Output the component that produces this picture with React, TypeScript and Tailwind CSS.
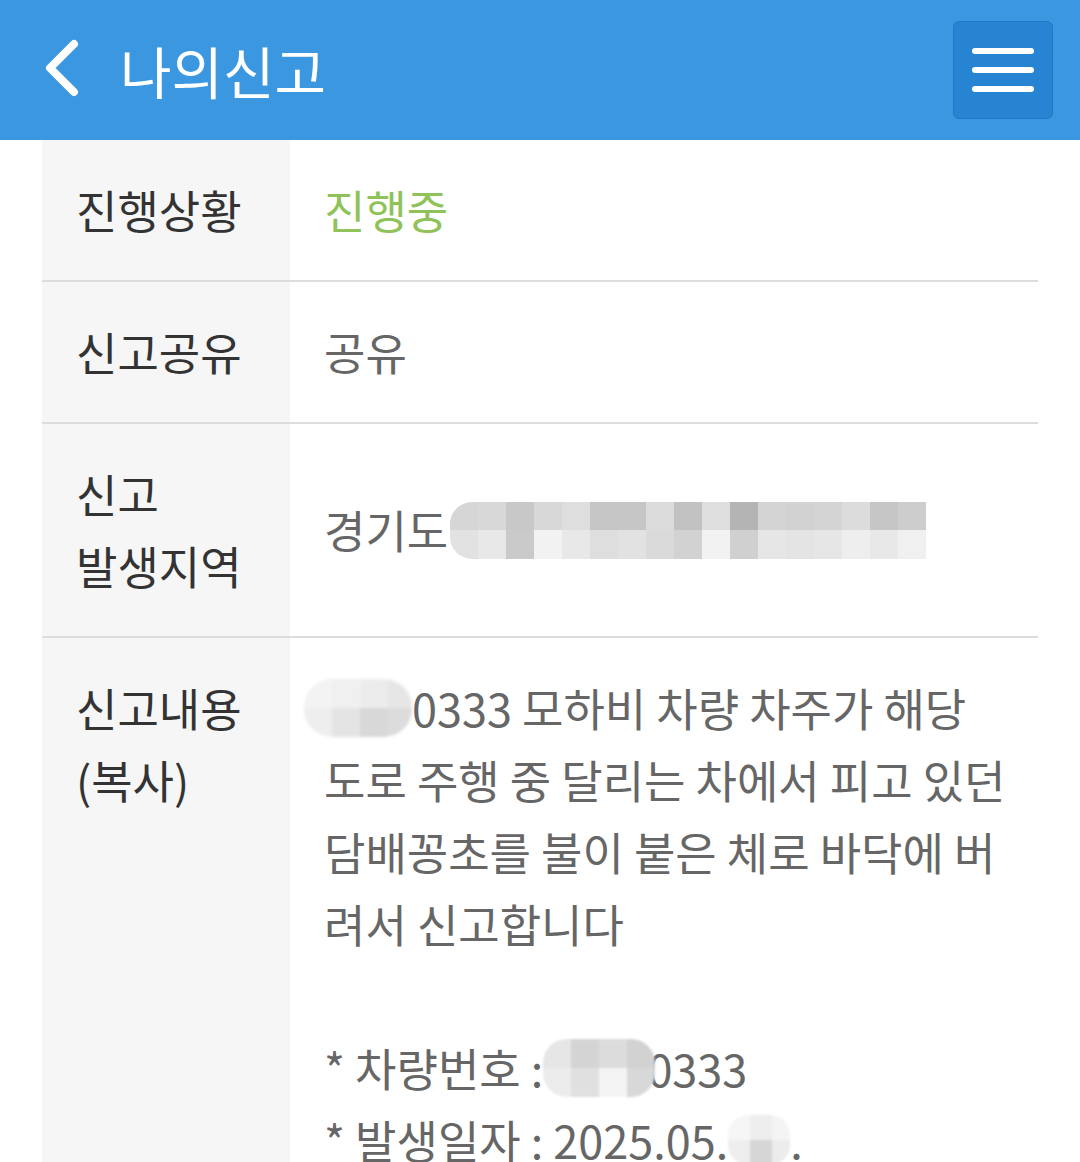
import React from "react";

const font = { fontFamily: '"Noto Sans CJK KR", "Noto Sans", sans-serif' };

function Mosaic({ rows, cell, className }: { rows: string[][]; cell: string; className: string }) {
  return (
    <span className={`inline-flex shrink-0 flex-col overflow-hidden align-middle ${className}`}>
      {rows.map((r, i) => (
        <span key={i} className="flex flex-1">
          {r.map((c, j) => (
            <span key={j} className={`${cell} h-full shrink-0 ${c}`} />
          ))}
        </span>
      ))}
    </span>
  );
}

const addrRows = [
  ["bg-[#d6d6d6]", "bg-[#d8d8d8]", "bg-[#c8c8c8]", "bg-[#d8d8d8]", "bg-[#dedede]", "bg-[#c6c6c6]", "bg-[#c6c6c6]", "bg-[#dcdcdc]", "bg-[#c2c2c2]", "bg-[#dedede]", "bg-[#b4b4b4]", "bg-[#d4d4d4]", "bg-[#d2d2d2]", "bg-[#d4d4d4]", "bg-[#dcdcdc]", "bg-[#c6c6c6]", "bg-[#cdcdcd]"],
  ["bg-[#e2e2e2]", "bg-[#e8e8e8]", "bg-[#cacaca]", "bg-[#f2f2f2]", "bg-[#e8e8e8]", "bg-[#dedede]", "bg-[#e2e2e2]", "bg-[#dadada]", "bg-[#d2d2d2]", "bg-[#f2f2f2]", "bg-[#d0d0d0]", "bg-[#e6e6e6]", "bg-[#e4e4e4]", "bg-[#e6e6e6]", "bg-[#eeeeee]", "bg-[#e8e8e8]", "bg-[#f0f0f0]"],
];

const blob1Rows = [
  ["bg-[#f3f3f3]", "bg-[#f0f0f0]", "bg-[#ececec]", "bg-[#e6e6e6]"],
  ["bg-[#eeeeee]", "bg-[#e4e4e4]", "bg-[#d8d8d8]", "bg-[#dcdcdc]"],
];

const plateRows = [
  ["bg-[#e6e6e6]", "bg-[#d4d4d4]", "bg-[#dcdcdc]", "bg-[#d2d2d2]"],
  ["bg-[#ececec]", "bg-[#e0e0e0]", "bg-[#f4f4f4]", "bg-[#d8d8d8]"],
];

const dateRows = [
  ["bg-[#f6f6f6]", "bg-[#eeeeee]", "bg-[#f4f4f4]"],
  ["bg-[#eeeeee]", "bg-[#d6d6d6]", "bg-[#ececec]"],
];

function Row({ label, children, top }: { label: React.ReactNode; children: React.ReactNode; top?: boolean }) {
  return (
    <div className="flex border-b-2 border-[#dddddd]">
      <div className="w-[248px] shrink-0 bg-[#f6f6f6] pl-[34px] pr-[10px] py-[34px] whitespace-nowrap text-[#333333]">{label}</div>
      <div className={`flex min-w-0 flex-1 pl-[34px] pr-[20px] py-[34px] text-[#666666] ${top ? "items-start" : "items-center"}`}>
        {children}
      </div>
    </div>
  );
}

export default function App() {
  return (
    <div className="min-h-[1162px] w-[1080px] overflow-hidden bg-white" style={font}>
      <header className="flex h-[140px] items-center bg-[#3a97e0] pl-[44px] pr-[27px]">
        <svg width="40" height="62" viewBox="0 0 40 62" className="shrink-0">
          <polyline points="30,5 6,29 30,53" fill="none" stroke="white" strokeWidth="8" strokeLinecap="round" strokeLinejoin="round" />
        </svg>
        <h1 className="ml-[36px] text-[56px] font-normal leading-none text-white">나의신고</h1>
        <button className="ml-auto flex h-[98px] w-[100px] flex-col items-center justify-center gap-[13px] rounded-[6px] border border-[#1f78c7] bg-[#2684d2] pb-[1px]">
          <span className="block h-[6px] w-[62px] rounded-full bg-white" />
          <span className="block h-[6px] w-[62px] rounded-full bg-white" />
          <span className="block h-[6px] w-[62px] rounded-full bg-white" />
        </button>
      </header>

      <div className="mx-[42px] text-[45px] leading-[72px]">
        <Row label="진행상황">
          <span className="text-[#8fc35a]">진행중</span>
        </Row>
        <Row label="신고공유">
          <span>공유</span>
        </Row>
        <Row label={<>신고<br />발생지역</>}>
          <span className="flex items-center whitespace-nowrap">
            경기도
            <Mosaic rows={addrRows} cell="w-[28px]" className="ml-[2px] h-[57px] w-[478px] rounded-l-[22px]" />
          </span>
        </Row>
        <Row label={<>신고내용<br />(복사)</>} top>
          <div className="whitespace-nowrap">
            <div className="flex items-center">
              <Mosaic rows={blob1Rows} cell="w-[28px]" className="-ml-[20px] h-[58px] w-[108px] rounded-[28px] blur-[1.5px]" />
              <span>0333 모하비 차량 차주가 해당</span>
            </div>
            <div>도로 주행 중 달리는 차에서 피고 있던</div>
            <div>담배꽁초를 불이 붙은 체로 바닥에 버</div>
            <div>려서 신고합니다</div>
            <div>&nbsp;</div>
            <div className="flex items-center">
              <span>* 차량번호 :&nbsp;</span>
              <Mosaic rows={plateRows} cell="w-[28px]" className="-ml-[10px] h-[58px] w-[112px] rounded-[24px] blur-[1px]" />
              <span className="-ml-[8px]">0333</span>
            </div>
            <div className="flex items-center">
              <span>* 발생일자 : 2025.05.</span>
              <Mosaic rows={dateRows} cell="w-[22px]" className="h-[50px] w-[62px] rounded-[20px] blur-[1px]" />
              <span>.</span>
            </div>
            <div>&nbsp;</div>
          </div>
        </Row>
      </div>
    </div>
  );
}
